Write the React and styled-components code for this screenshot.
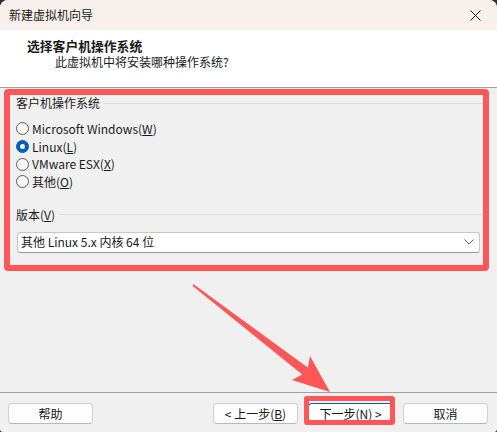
import React from 'react';
import styled, { createGlobalStyle } from 'styled-components';

const GlobalStyle = createGlobalStyle`
  html, body {
    margin: 0;
    padding: 0;
    background: #2e2e2e;
  }
  body {
    font-family: "Noto Sans CJK SC", "Noto Sans", sans-serif;
    font-size: 12px;
    color: #1a1a1a;
  }
`;

const Window = styled.div`
  position: relative;
  width: 497px;
  height: 432px;
  display: flex;
  flex-direction: column;
  background: #f0f0f0;
  border-radius: 8px 8px 3px 3px;
  overflow: hidden;
`;

const TitleBar = styled.div`
  height: 30px;
  flex: none;
  display: flex;
  align-items: center;
  justify-content: space-between;
  padding: 0 16px 0 9px;
  background: #f7f0ec;
  box-sizing: border-box;
  line-height: 16px;
`;

const CloseIcon = styled.svg`
  width: 11px;
  height: 11px;
  display: block;
`;

const Header = styled.div`
  height: 58px;
  flex: none;
  box-sizing: border-box;
  background: #ffffff;
  border-bottom: 1px solid #a0a0a0;
  padding: 8px 0 0 27px;
  display: flex;
  flex-direction: column;
`;

const HeaderTitle = styled.div`
  font-weight: 700;
  font-size: 12.8px;
  line-height: 16px;
`;

const HeaderSub = styled.div`
  margin-left: 28px;
  line-height: 16px;
`;

const Main = styled.div`
  flex: 1;
  padding: 1px 8px 0 4px;
`;

const Highlight = styled.div`
  height: 182px;
  box-sizing: border-box;
  border: 6px solid #ff5757;
  border-radius: 4px;
  display: flex;
  flex-direction: column;
`;

const GroupTitle = styled.div`
  display: flex;
  align-items: center;
  gap: 4px;
  margin-left: 6px;
  line-height: 16px;
  margin-top: ${(p) => p.$top || 0}px;

  &::after {
    content: '';
    flex: 1;
    height: 1px;
    background: #dcdcdc;
  }
`;

const RadioList = styled.div`
  display: flex;
  flex-direction: column;
  margin-top: 9px;
  padding-left: 6px;
`;

const RadioRow = styled.label`
  height: 17.7px;
  display: flex;
  align-items: center;
  gap: 3px;
  line-height: 16px;
`;

const RadioDot = styled.span`
  width: 13px;
  height: 13px;
  box-sizing: border-box;
  border-radius: 50%;
  flex: none;
  display: flex;
  align-items: center;
  justify-content: center;
  border: 1px solid ${(p) => (p.$checked ? '#005fb8' : '#5c5c5c')};
  background: ${(p) => (p.$checked ? '#005fb8' : '#f7f7f7')};

  &::after {
    content: '';
    display: ${(p) => (p.$checked ? 'block' : 'none')};
    width: 5px;
    height: 5px;
    border-radius: 50%;
    background: #ffffff;
  }
`;

const Select = styled.div`
  margin: 9px 0 0 7px;
  width: 463px;
  height: 21px;
  box-sizing: border-box;
  background: #ffffff;
  border: 1px solid #c8c8c8;
  border-bottom-color: #9a9a9a;
  border-radius: 3px;
  display: flex;
  align-items: center;
  justify-content: space-between;
  padding: 0 5px 0 3px;
  line-height: 16px;
`;

const Chevron = styled.svg`
  width: 10px;
  height: 6px;
  display: block;
`;

const Footer = styled.div`
  height: 40px;
  flex: none;
  box-sizing: border-box;
  border-top: 1px solid #a0a0a0;
  padding: 10px 9px 0 8px;
  display: flex;
  align-items: flex-start;
  gap: 10px;
`;

const Spacer = styled.div`
  flex: 1;
`;

const Button = styled.div`
  width: 85px;
  height: 21px;
  box-sizing: border-box;
  border: 1px solid ${(p) => (p.$primary ? '#005fb8' : '#d0d0d0')};
  border-bottom-color: ${(p) => (p.$primary ? '#003e73' : '#b8b8b8')};
  border-radius: 4px;
  background: #fdfdfd;
  display: flex;
  align-items: center;
  justify-content: center;
  line-height: 16px;
`;

const Marked = styled.div`
  position: relative;

  &::after {
    content: '';
    position: absolute;
    left: -4px;
    top: -7px;
    width: 91px;
    height: 29px;
    box-sizing: border-box;
    border: 5px solid #ff5757;
    border-radius: 3px;
  }
`;

const Arrow = styled.svg`
  position: absolute;
  left: 0;
  top: 0;
  width: 497px;
  height: 432px;
  pointer-events: none;
`;

const options = [
  { name: 'Microsoft Windows', key: 'W' },
  { name: 'Linux', key: 'L', checked: true },
  { name: 'VMware ESX', key: 'X' },
  { name: '其他', key: 'O' },
];

export default function App() {
  return (
    <>
      <GlobalStyle />
      <Window>
        <TitleBar>
          <span>新建虚拟机向导</span>
          <CloseIcon viewBox="0 0 11 11">
            <path d="M0.5 0.5 L10.5 10.5 M10.5 0.5 L0.5 10.5" stroke="#1a1a1a" strokeWidth="1" fill="none" />
          </CloseIcon>
        </TitleBar>

        <Header>
          <HeaderTitle>选择客户机操作系统</HeaderTitle>
          <HeaderSub>此虚拟机中将安装哪种操作系统?</HeaderSub>
        </Header>

        <Main>
          <Highlight>
            <GroupTitle>客户机操作系统</GroupTitle>
            <RadioList>
              {options.map((o) => (
                <RadioRow key={o.key}>
                  <RadioDot $checked={o.checked} />
                  <span>
                    {o.name}(<u>{o.key}</u>)
                  </span>
                </RadioRow>
              ))}
            </RadioList>

            <GroupTitle $top={16}>
              <span>
                版本(<u>V</u>)
              </span>
            </GroupTitle>
            <Select>
              <span>其他 Linux 5.x 内核 64 位</span>
              <Chevron viewBox="0 0 10 6">
                <path d="M0.5 0.5 L5 5 L9.5 0.5" stroke="#606060" strokeWidth="1" fill="none" />
              </Chevron>
            </Select>
          </Highlight>
        </Main>

        <Footer>
          <Button>帮助</Button>
          <Spacer />
          <Button>
            &lt; 上一步(<u>B</u>)
          </Button>
          <Marked>
            <Button $primary>
              下一步(<u>N</u>) &gt;
            </Button>
          </Marked>
          <Button>取消</Button>
        </Footer>

        <Arrow viewBox="0 0 497 432">
          <polygon
            points="192.4,285.8 302.2,374.5 292,380 330,392 310,356 307.8,367.5 193.6,284.2"
            fill="#ff5757"
          />
        </Arrow>
      </Window>
    </>
  );
}
